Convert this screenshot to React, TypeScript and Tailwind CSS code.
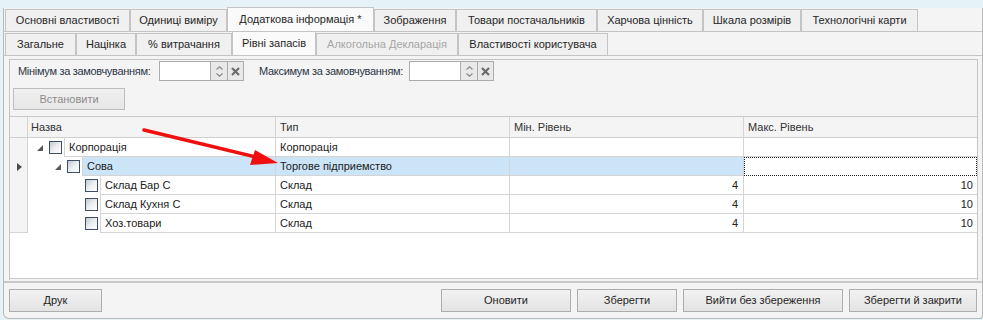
import React from "react";

const tabs1 = [
  { t: "Основні властивості", w: "w-[125px]" },
  { t: "Одиниці виміру", w: "w-[97px]" },
  { t: "Додаткова інформація *", w: "w-[147px]", sel: true },
  { t: "Зображення", w: "w-[82px]" },
  { t: "Товари постачальників", w: "w-[141px]" },
  { t: "Харчова цінність", w: "w-[106px]" },
  { t: "Шкала розмірів", w: "w-[98px]" },
  { t: "Технологічні карти", w: "w-[117px]" },
];

const tabs2 = [
  { t: "Загальне", w: "w-[71px]" },
  { t: "Націнка", w: "w-[60px]" },
  { t: "% витрачання", w: "w-[96px]" },
  { t: "Рівні запасів", w: "w-[84px]", sel: true },
  { t: "Алкогольна Декларація", w: "w-[142px]", dis: true },
  { t: "Властивості користувача", w: "w-[150px]" },
];

type Row = {
  name: string;
  level: number;
  expand?: boolean;
  type: string;
  min?: string;
  max?: string;
  sel?: boolean;
};

const rows: Row[] = [
  { name: "Корпорація", level: 0, expand: true, type: "Корпорація" },
  { name: "Сова", level: 1, expand: true, type: "Торгове підприемство", sel: true },
  { name: "Склад Бар С", level: 2, type: "Склад", min: "4", max: "10" },
  { name: "Склад Кухня С", level: 2, type: "Склад", min: "4", max: "10" },
  { name: "Хоз.товари", level: 2, type: "Склад", min: "4", max: "10" },
];

const indents = ["w-0", "w-[18px]", "w-[36px]"];

function Tab({ t, w, sel, dis }: { t: string; w: string; sel?: boolean; dis?: boolean }) {
  return (
    <div
      className={`${w} shrink-0 whitespace-nowrap flex items-center justify-center border border-b-0 border-[#c4c4c4] ${
        sel ? "h-[24px] bg-[#fafafa]" : "h-[22px] bg-[#f0f0f0]"
      } ${dis ? "text-[#a6a6a6]" : "text-[#262626]"}`}
    >
      {t}
    </div>
  );
}

function Checkbox() {
  return (
    <div className="w-[13px] h-[13px] border border-[#3e4d62] bg-gradient-to-br from-[#c3c9d2] via-[#eceef2] to-white shrink-0" />
  );
}

function Expander() {
  return (
    <svg width="6" height="6" viewBox="0 0 6 6">
      <polygon points="6,0 6,6 0,6" fill="#5a5a5a" />
    </svg>
  );
}

function NumInput() {
  return (
    <div className="flex h-[20px] shrink-0">
      <div className="w-[52px] h-full border border-[#ababab] bg-white" />
      <div className="w-[16px] h-full border-y border-[#ababab] bg-[#e9e9e9] flex flex-col items-center justify-center gap-[3px]">
        <svg width="7" height="4" viewBox="0 0 7 4">
          <polyline points="0.5,3.5 3.5,0.8 6.5,3.5" fill="none" stroke="#8a8a8a" strokeWidth="1.2" />
        </svg>
        <svg width="7" height="4" viewBox="0 0 7 4">
          <polyline points="0.5,0.5 3.5,3.2 6.5,0.5" fill="none" stroke="#8a8a8a" strokeWidth="1.2" />
        </svg>
      </div>
      <div className="w-[17px] h-full border border-[#ababab] bg-[#e9e9e9] flex items-center justify-center">
        <svg width="9" height="9" viewBox="0 0 9 9">
          <line x1="1" y1="1" x2="8" y2="8" stroke="#6b6b6b" strokeWidth="2.2" />
          <line x1="8" y1="1" x2="1" y2="8" stroke="#6b6b6b" strokeWidth="2.2" />
        </svg>
      </div>
    </div>
  );
}

function Btn({ children, w }: { children: React.ReactNode; w: string }) {
  return (
    <div
      className={`${w} h-[23px] flex items-center justify-center border border-[#adadad] bg-gradient-to-b from-[#f2f2f2] to-[#e3e3e3] text-[#262626]`}
    >
      {children}
    </div>
  );
}

export default function App() {
  return (
    <div className="relative w-[983px] h-[320px] overflow-hidden bg-[#e5f3f6] font-['Liberation_Sans',Arial,sans-serif] text-[11px] leading-none">
      <div className="h-[8px]" />
      <div className="ml-[3px] h-[311px] border-l border-r border-b border-[#b9b9b9] rounded-bl-[6px] rounded-br-[3px] bg-[#f4f4f4] flex flex-col">
        {/* tab row 1 */}
        <div className="h-[24px] pl-[1px] flex items-end border-b border-[#c4c4c4]">
          {tabs1.map((t) => (
            <Tab key={t.t} {...t} />
          ))}
        </div>
        {/* tab row 2 */}
        <div className="h-[24px] pl-[1px] flex items-end border-b border-[#c4c4c4]">
          {tabs2.map((t) => (
            <Tab key={t.t} {...t} />
          ))}
        </div>
        {/* frame */}
        <div className="mt-[3px] ml-[5px] mr-[4px] h-[221px] border-l border-t border-r border-[#c4c4c4] flex flex-col">
          <div className="mt-[1px] h-[20px] flex items-center text-[#2e3646] whitespace-nowrap tracking-[-0.3px]">
            <span className="ml-[8px] w-[141px] shrink-0">Мінімум за замовчуванням:</span>
            <NumInput />
            <span className="ml-[15px] w-[150px] shrink-0">Максимум за замовчуванням:</span>
            <NumInput />
          </div>
          <div className="mt-[7px] ml-[3px] w-[112px] h-[22px] flex items-center justify-center border border-[#bdbdbd] bg-gradient-to-b from-[#f0f0f0] to-[#e6e6e6] text-[#8c8c8c]">
            Встановити
          </div>
          {/* grid */}
          <div className="mt-[6px] h-[163px] border-t border-b border-[#c9c9c9] bg-white flex flex-col">
            <div className="h-[21px] flex bg-[#f4f4f4] border-b border-[#d0d0d0] text-[#333]">
              <div className="w-[18px] border-r border-[#d4d4d4]" />
              <div className="w-[248px] pl-[3px] flex items-center border-r border-[#d4d4d4]">Назва</div>
              <div className="w-[234px] pl-[4px] flex items-center border-r border-[#d4d4d4]">Тип</div>
              <div className="w-[234px] pl-[4px] flex items-center border-r border-[#d4d4d4]">Мін. Рівень</div>
              <div className="flex-1 pl-[4px] flex items-center">Макс. Рівень</div>
            </div>
            {rows.map((r, i) => (
              <div key={r.name} className="h-[19px] flex text-[#222]">
                <div
                  className={`w-[18px] bg-[#f4f4f4] border-r border-[#d4d4d4] flex items-center justify-center ${
                    i === rows.length - 1 ? "border-b" : ""
                  }`}
                >
                  {r.sel && (
                    <svg width="5" height="8" viewBox="0 0 5 8" className="ml-[2px]">
                      <polygon points="0,0 5,4 0,8" fill="#4a4a4a" />
                    </svg>
                  )}
                </div>
                <div className="w-[248px] flex border-r border-[#d4d4d4]">
                  <div className={`${indents[r.level]} shrink-0`} />
                  <div className="w-[21px] shrink-0 flex items-center pl-[9px]">{r.expand && <Expander />}</div>
                  <div className="flex items-center">
                    <Checkbox />
                  </div>
                  <div
                    className={`ml-[2px] flex-1 pl-[4px] flex items-center border-l border-b border-[#d4d4d4] ${
                      r.sel ? "bg-[#cce4f7]" : ""
                    }`}
                  >
                    {r.name}
                  </div>
                </div>
                <div
                  className={`w-[234px] pl-[4px] flex items-center border-r border-b border-[#d4d4d4] ${
                    r.sel ? "bg-[#cce4f7]" : ""
                  }`}
                >
                  {r.type}
                </div>
                <div
                  className={`w-[234px] pr-[5px] flex items-center justify-end border-r border-b border-[#d4d4d4] ${
                    r.sel ? "bg-[#cce4f7]" : ""
                  }`}
                >
                  {r.min}
                </div>
                <div
                  className={`flex-1 pr-[4px] flex items-center justify-end ${
                    r.sel ? "border border-dotted border-[#222]" : "border-b border-[#d4d4d4]"
                  }`}
                >
                  {r.max}
                </div>
              </div>
            ))}
          </div>
        </div>
        <div className="mt-[1px] h-[2px] bg-[#c8c8c8]" />
        {/* bottom buttons */}
        <div className="mt-[6px] ml-[5px] mr-[5px] flex items-center">
          <Btn w="w-[93px]">Друк</Btn>
          <div className="flex-1" />
          <div className="flex gap-[6px]">
            <Btn w="w-[130px]">Оновити</Btn>
            <Btn w="w-[100px]">Зберегти</Btn>
            <Btn w="w-[160px]">Вийти без збереження</Btn>
            <Btn w="w-[128px]">Зберегти й закрити</Btn>
          </div>
        </div>
      </div>
      {/* red arrow annotation */}
      <svg className="absolute left-0 top-0 pointer-events-none" width="983" height="320">
        <line x1="144" y1="130" x2="256" y2="157" stroke="#f00f0f" strokeWidth="3.5" strokeLinecap="round" />
        <polygon points="278,163 250,165 255,150" fill="#f00f0f" />
      </svg>
    </div>
  );
}
